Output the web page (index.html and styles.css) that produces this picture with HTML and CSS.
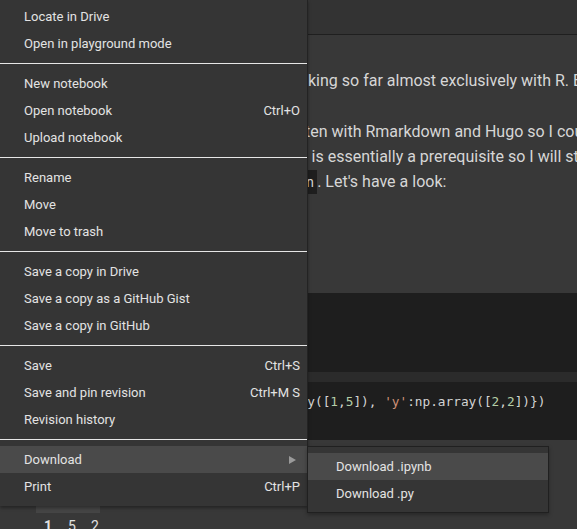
FILE: index.html
```html
<!DOCTYPE html>
<html lang="en">
<head>
<meta charset="utf-8">
<title>Notebook</title>
<link rel="stylesheet" href="styles.css">
</head>
<body>
<div class="page">
  <header class="topbar"></header>
  <main class="doc">
    <div class="md">
      <p class="para">
        <span class="ln"><span class="pre">Until now I have been wor</span><span class="post l1">king so far almost exclusively with R. But Python keeps coming up everywhere.</span></span>
      </p>
      <p class="para">
        <span class="ln"><span class="pre">This blog is writ</span><span class="post l2">ten with Rmarkdown and Hugo so I could use Python right inside my posts.</span></span>
        <span class="ln"><span class="pre">Getting Python to run in R</span><span class="post">&nbsp;&#8202;is essentially a prerequisite so I will start with that.</span></span>
        <span class="ln"><span class="pre">Let's begin with <code class="ic ic-l">reticulate::repl_pytho</code></span><span class="post"><code class="ic ic-r">n</code>. Let's have a look:</span></span>
      </p>
    </div>

    <section class="cell cell-a">
      <pre class="code"><span class="kw">import</span> pandas <span class="kw">as</span> pd
<span class="kw">import</span> numpy <span class="kw">as</span> np</pre>
    </section>
    <div class="cell-gap"></div>
    <section class="cell cell-b">
      <pre class="code">df = pd.DataFrame({<span class="str">'x'</span>:np.array([<span class="num">1</span>,<span class="num">5</span>]), <span class="str">'y'</span>:np.array([<span class="num">2</span>,<span class="num">2</span>])})</pre>
    </section>

    <div class="output">
      <div class="df">
        <div class="row head"><span class="c"></span><span class="c">x</span><span class="c">y</span></div>
        <div class="row odd"><span class="c idx">0</span><span class="c">1</span><span class="c">2</span></div>
        <div class="row"><span class="c idx">1</span><span class="c">5</span><span class="c">2</span></div>
      </div>
    </div>
  </main>
</div>

<nav class="menu">
  <div class="group">
    <div class="item"><span>Locate in Drive</span></div>
    <div class="item"><span>Open in playground mode</span></div>
  </div>
  <div class="sep"></div>
  <div class="group">
    <div class="item"><span>New notebook</span></div>
    <div class="item"><span>Open notebook</span><span class="key">Ctrl+O</span></div>
    <div class="item"><span>Upload notebook</span></div>
  </div>
  <div class="sep"></div>
  <div class="group">
    <div class="item"><span>Rename</span></div>
    <div class="item"><span>Move</span></div>
    <div class="item"><span>Move to trash</span></div>
  </div>
  <div class="sep"></div>
  <div class="group">
    <div class="item"><span>Save a copy in Drive</span></div>
    <div class="item"><span>Save a copy as a GitHub Gist</span></div>
    <div class="item"><span>Save a copy in GitHub</span></div>
  </div>
  <div class="sep"></div>
  <div class="group">
    <div class="item"><span>Save</span><span class="key">Ctrl+S</span></div>
    <div class="item"><span>Save and pin revision</span><span class="key">Ctrl+M S</span></div>
    <div class="item"><span>Revision history</span></div>
  </div>
  <div class="sep"></div>
  <div class="group">
    <div class="item active has-sub"><span>Download</span>
      <svg class="arrow" width="7" height="8" viewBox="0 0 7 8"><polygon points="0,0 7,4 0,8" fill="#9a9a9a"/></svg>
      <div class="submenu">
        <div class="item sub active"><span>Download .ipynb</span></div>
        <div class="item sub"><span>Download .py</span></div>
      </div>
    </div>
    <div class="item"><span>Print</span><span class="key">Ctrl+P</span></div>
  </div>
</nav>
</body>
</html>
```

FILE: styles.css
```css
html, body {
  margin: 0;
  padding: 0;
  background: #383838;
  overflow: hidden;
  font-family: Roboto, "Noto Sans", Arial, sans-serif;
}

.page {
  width: 577px;
  height: 529px;
  overflow: hidden;
}

.topbar {
  height: 34px;
  background: #333333;
  border-bottom: 1px solid #1f1f1f;
}

.doc {
  padding-top: 33px;
}

.md {
  margin-bottom: 99px;
}

.para {
  margin: 0 0 26px;
  font-size: 16px;
  line-height: 25px;
  color: #d6d6d6;
}

.para:last-child {
  margin-bottom: 0;
}

.ln {
  display: flex;
  height: 25px;
  white-space: nowrap;
}

.pre {
  flex: none;
  width: 306px;
  display: flex;
  justify-content: flex-end;
  overflow: hidden;
}

.post {
  flex: none;
}

.l1 {
  padding-left: 2px;
}

.l2 {
  margin-left: -1px;
}

.ic {
  font-family: "DejaVu Sans Mono", "Liberation Mono", monospace;
  font-size: 13.5px;
  line-height: 1;
  background: #1e1e1e;
  color: #d6d6d6;
  padding: 4px 0;
}

.ic-l { padding-left: 3px; }
.ic-r { padding-right: 3px; }

.cell {
  background: #1e1e1e;
}

.cell-a {
  height: 79px;
}

.cell-gap {
  height: 10px;
  background: #2b2b2b;
}

.cell-b {
  height: 58px;
}

.code {
  margin: 0;
  padding: 10px 0 0 77px;
  font-family: "DejaVu Sans Mono", "Liberation Mono", monospace;
  font-size: 12.75px;
  line-height: 19px;
  color: #d4d4d4;
}

.kw { color: #c586c0; }
.str { color: #ce9178; }
.num { color: #b5cea8; }

.output {
  padding: 17px 0 0 36px;
}

.df {
  width: 64px;
  font-size: 14px;
  color: #e2e2e2;
}

.row {
  display: grid;
  grid-template-columns: 24px 23px 17px;
  height: 28px;
  box-sizing: border-box;
  padding-top: 3px;
  line-height: 20px;
  align-items: start;
}

.row.odd {
  background: #454545;
}

.c {
  padding-left: 8px;
}

.idx, .head .c {
  font-weight: 700;
}

/* ---------- menu ---------- */
.menu {
  position: absolute;
  top: 0;
  left: 0;
  width: 307px;
  padding: 3px 0 6px;
  background: #353535;
  border-right: 1px solid #232323;
  box-shadow: 0 2px 3px rgba(0, 0, 0, 0.35);
  font-family: Roboto, "Noto Sans", Arial, sans-serif;
  font-size: 13px;
  color: #e3e3e3;
}

.sep {
  height: 1px;
  margin: 6px 0;
  background: #e6e6e6;
}

.item {
  height: 27px;
  display: flex;
  align-items: center;
  justify-content: space-between;
  padding: 0 7px 0 24px;
  white-space: nowrap;
}

.item.active {
  background: #4a4a4a;
}

.key {
  color: #e3e3e3;
}

.arrow {
  margin-right: 4px;
}

.has-sub {
  position: relative;
}

.submenu {
  position: absolute;
  top: 0;
  left: 100%;
  width: 240px;
  padding: 6px 0 5px;
  background: #353535;
  border: 1px solid #202020;
  box-shadow: 0 2px 4px rgba(0, 0, 0, 0.3);
}

.item.sub {
  padding-left: 28px;
}
```
